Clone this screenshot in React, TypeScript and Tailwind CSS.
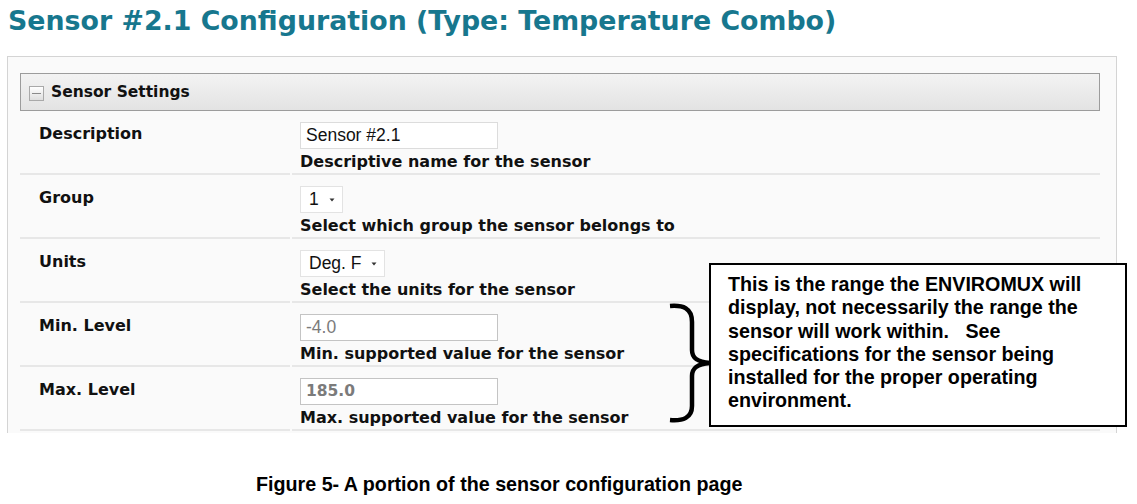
import React from "react";

const verdana = { fontFamily: '"DejaVu Sans", Verdana, sans-serif' };
const arial = { fontFamily: '"Liberation Sans", Arial, sans-serif' };

function MinusBox() {
  return (
    <span className="flex h-[15px] w-[15px] items-center justify-center border border-[#a9a9a9] bg-gradient-to-b from-[#ffffff] to-[#dedede]">
      <span className="block h-[1px] w-[9px] bg-[#8a8a8a]" />
    </span>
  );
}

function Arrow() {
  return (
    <svg width="6" height="4" viewBox="0 0 6 4" className="shrink-0">
      <path d="M0.5 0.5 L5.5 0.5 L3 3.5 Z" fill="#333" />
    </svg>
  );
}

function Help({ children }: { children: React.ReactNode }) {
  return (
    <div className="mt-[3px] whitespace-nowrap text-[16px] font-bold leading-[19px] text-[#111]" style={verdana}>
      {children}
    </div>
  );
}

function Row({ label, children }: { label: string; children: React.ReactNode }) {
  return (
    <>
      <div className="h-[64px] border-b-2 border-[#e7e7e7] pl-[19px] pt-[10px]">
        <span className="text-[16px] font-bold leading-[19px] text-[#111]" style={verdana}>
          {label}
        </span>
      </div>
      <div className="h-[64px] border-b-2 border-[#e7e7e7] pl-[8px] pt-[11px]">{children}</div>
    </>
  );
}

function TextBox({ value, muted, bold }: { value: string; muted?: boolean; bold?: boolean }) {
  return (
    <div
      className={
        "flex h-[27px] w-[198px] items-center border bg-white px-[5px] " +
        (muted ? "border-[#c4c4c4] text-[#7b7b7b]" : "border-[#dcdcdc] text-[#111]") +
        (bold ? " text-[15.5px] font-bold" : " text-[17.5px]")
      }
      style={bold ? verdana : arial}
    >
      {value}
    </div>
  );
}

function SelectBox({ value, width }: { value: string; width: string }) {
  return (
    <div
      className={"flex h-[27px] items-center justify-between border border-[#e3e3e3] bg-white pl-[8px] pr-[7px] text-[17.5px] text-[#111] " + width}
      style={arial}
    >
      <span>{value}</span>
      <Arrow />
    </div>
  );
}

export default function App() {
  return (
    <div className="relative h-[504px] w-[1137px] overflow-hidden bg-white">
      <h1
        className="whitespace-nowrap pl-[8px] pt-[7px] text-[26.8px] font-bold leading-[27px] text-[#17778e]"
        style={verdana}
      >
        Sensor #2.1 Configuration (Type: Temperature Combo)
      </h1>

      <div className="ml-[7px] mt-[22px] h-[377px] w-[1110px] overflow-hidden border border-b-0 border-[#d4d4d4] bg-[#fafafa] pl-[12px] pr-[16px] pt-[16px]">
        <div className="flex h-[38px] items-center gap-[7px] border border-[#9c9c9c] bg-gradient-to-b from-[#f3f3f3] to-[#e3e3e3] pl-[8px] pt-[2px]">
          <MinusBox />
          <span className="text-[15.5px] font-bold text-[#111]" style={verdana}>
            Sensor Settings
          </span>
        </div>

        <div className="grid grid-cols-[270px_1fr] gap-x-[2px]">
          <Row label="Description">
            <TextBox value="Sensor #2.1" />
            <Help>Descriptive name for the sensor</Help>
          </Row>
          <Row label="Group">
            <SelectBox value="1" width="w-[43px]" />
            <Help>Select which group the sensor belongs to</Help>
          </Row>
          <Row label="Units">
            <SelectBox value="Deg. F" width="w-[85px]" />
            <Help>Select the units for the sensor</Help>
          </Row>
          <Row label="Min. Level">
            <TextBox value="-4.0" muted />
            <Help>Min. supported value for the sensor</Help>
          </Row>
          <Row label="Max. Level">
            <TextBox value="185.0" muted bold />
            <Help>Max. supported value for the sensor</Help>
          </Row>
        </div>
      </div>

      <p className="mt-[40px] whitespace-nowrap pl-[256px] text-[19.7px] font-bold leading-[23px] text-black" style={arial}>
        Figure 5- A portion of the sensor configuration page
      </p>

      {/* annotation over the form */}
      <svg className="absolute left-[667px] top-[302px]" width="46" height="124" viewBox="0 0 46 124">
        <path
          d="M3 4 C16 3 25 6 25 20 L25 48 C25 56 30 60 43 61 C30 62 25 66 25 74 L25 104 C25 116 16 119 3 118"
          fill="none"
          stroke="#000"
          strokeWidth="4.5"
        />
      </svg>
      <div
        className="absolute left-[709px] top-[263px] h-[164px] w-[418px] border-2 border-black bg-white pl-[17px] pt-[8px] text-[19.7px] font-bold leading-[23.3px] text-black"
        style={arial}
      >
        <div className="whitespace-nowrap">This is the range the ENVIROMUX will</div>
        <div className="whitespace-nowrap">display, not necessarily the range the</div>
        <div className="whitespace-nowrap">sensor will work within.&nbsp;&nbsp; See</div>
        <div className="whitespace-nowrap">specifications for the sensor being</div>
        <div className="whitespace-nowrap">installed for the proper operating</div>
        <div className="whitespace-nowrap">environment.</div>
      </div>
    </div>
  );
}
